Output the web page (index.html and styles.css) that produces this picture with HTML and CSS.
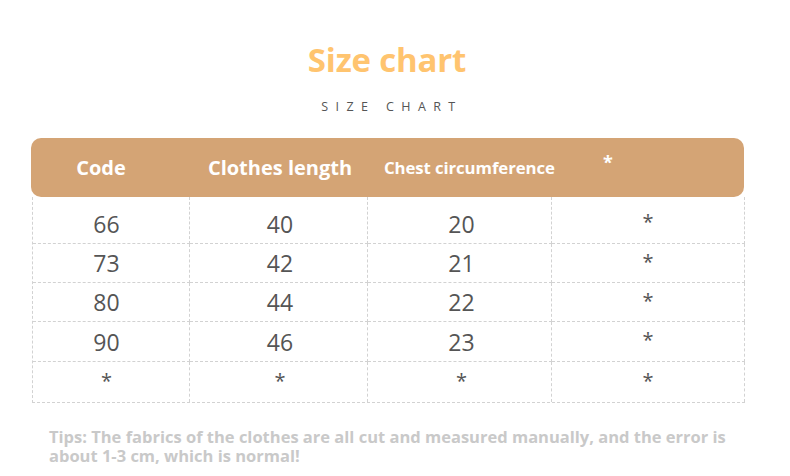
FILE: index.html
```html
<!DOCTYPE html>
<html>
<head>
<meta charset="utf-8">
<link rel="stylesheet" href="styles.css">
</head>
<body>
<div class="page">
  <div class="title">Size chart</div>
  <div class="subtitle">SIZE CHART</div>
  <div class="chart">
    <div class="head">
      <div class="h h1">Code</div>
      <div class="h h2">Clothes length</div>
      <div class="h h3">Chest circumference</div>
      <div class="h h4">*</div>
    </div>
    <div class="grid">
      <div class="c k1 first">66</div><div class="c k2 first">40</div><div class="c k3 first">20</div><div class="c first star">*</div>
      <div class="c k1">73</div><div class="c k2">42</div><div class="c k3">21</div><div class="c star">*</div>
      <div class="c k1">80</div><div class="c k2">44</div><div class="c k3">22</div><div class="c star">*</div>
      <div class="c k1">90</div><div class="c k2">46</div><div class="c k3">23</div><div class="c star">*</div>
      <div class="c k1 star">*</div><div class="c k2 star">*</div><div class="c k3 star">*</div><div class="c star">*</div>
    </div>
  </div>
  <p class="tips">Tips: The fabrics of the clothes are all cut and measured manually, and the error is about 1-3 cm, which is normal!</p>
</div>
</body>
</html>
```
FILE: styles.css
```css
* { box-sizing: border-box; }
html, body { margin: 0; padding: 0; background: #fff; }
body { font-family: "Open Sans", "Noto Sans", sans-serif; width: 790px; height: 476px; overflow: hidden; }
.page { padding-top: 37px; }
.title {
  text-align: center;
  font-size: 33px;
  font-weight: 700;
  color: #ffc46f;
  line-height: 46px;
  letter-spacing: -0.2px;
  margin-left: -16px;
}
.subtitle {
  text-align: center;
  font-size: 12.5px;
  color: #555;
  letter-spacing: 7.4px;
  line-height: 16px;
  margin-top: 16px;
  margin-left: -6px;
}
.chart { margin: 23px 0 0 31px; width: 713px; }
.head {
  height: 59px;
  background: #d4a475;
  border-radius: 10px;
  display: flex;
  align-items: center;
  color: #fff;
  font-weight: 700;
}
.h { text-align: center; white-space: nowrap; }
.h1 { width: 140px; font-size: 20px; }
.h2 { width: 218px; font-size: 20px; }
.h3 { width: 170px; margin-left: -5px; font-size: 16.8px; letter-spacing: -0.1px; }
.h4 { width: 108px; font-size: 18px; align-self: flex-start; padding-top: 12px; }
.grid {
  display: grid;
  grid-template-columns: 157px 178px 184px 193px;
  grid-template-rows: 47px 39px 39px 40px 40px;
  margin-left: 1px;
  width: 713px;
  border-left: 1px dashed #d2d2d2;
  border-bottom: 1px dashed #d2d2d2;
}
.c {
  display: flex;
  align-items: center;
  justify-content: center;
  border-right: 1px dashed #d2d2d2;
  border-bottom: 1px dashed #d2d2d2;
  font-size: 23px;
  color: #555;
}
.c.k1 { padding-right: 9px; }
.c.k2 { padding-left: 3px; }
.c.k3 { padding-left: 4px; }
.grid .c:nth-last-child(-n+4) { border-bottom: none; }
.c.first { padding-top: 7px; }
.c.star { font-size: 20px; padding-bottom: 4px; }
.c.first.star { padding-bottom: 0; padding-top: 2px; }
.tips {
  margin: 24px 0 0 49px;
  width: 690px;
  font-size: 16.5px;
  font-weight: 700;
  color: #c9c9c9;
  line-height: 19px;
}
```
